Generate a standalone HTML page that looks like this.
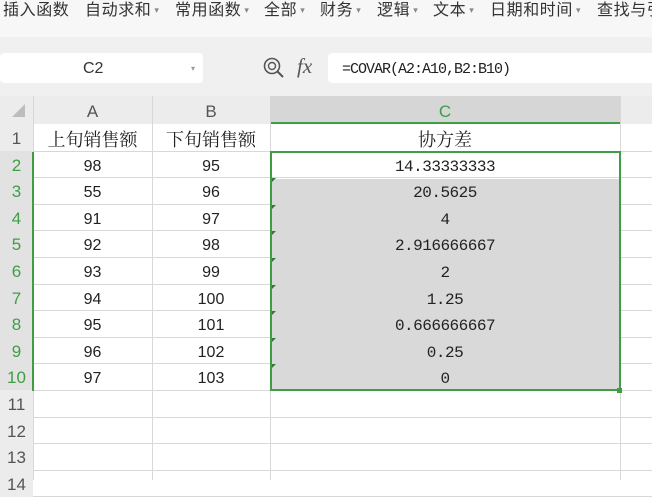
<html><head><style>
body{margin:0;width:652px;height:480px;overflow:hidden;background:#fff;font-family:"Liberation Sans","Noto Sans CJK SC",sans-serif;position:relative}
.a{position:absolute}
.tb{left:0;top:0;width:652px;height:37px;background:#f7f7f7;font-size:16px;color:#333;white-space:nowrap}
.tb span{position:absolute;top:-4px;letter-spacing:0.6px}
.tb i{font-style:normal;font-size:9px;color:#888;margin-left:3px;vertical-align:2px}
.c{position:absolute;text-align:center;font-size:16px;color:#222;line-height:26px;padding-top:3px}
.rh{position:absolute;left:0;width:33px;text-align:center;font-size:17px;color:#555;background:#ececec;line-height:26px;padding-top:2px;box-sizing:border-box}
.hl{position:absolute;height:1px;background:#d8d8d8;left:0;width:652px}
.vl{position:absolute;width:1px;background:#d8d8d8}
</style></head><body>
<div class="a tb"><span style="left:3px">插入函数</span><span style="left:85px">自动求和<i>▾</i></span><span style="left:175px">常用函数<i>▾</i></span><span style="left:264px">全部<i>▾</i></span><span style="left:320px">财务<i>▾</i></span><span style="left:377px">逻辑<i>▾</i></span><span style="left:433px">文本<i>▾</i></span><span style="left:490px">日期和时间<i>▾</i></span><span style="left:597px">查找与引</span></div>
<div class="a" style="left:0;top:37px;width:652px;height:59px;background:#f0f0f0"></div>
<div class="a" style="left:0;top:53px;width:203px;height:30px;background:#fff;border-radius:4px;font-size:16px;line-height:32px;color:#333"><span style="position:absolute;left:83px">C2</span><span style="position:absolute;left:191px;font-size:8px;color:#999">▾</span></div>
<svg class="a" style="left:262px;top:56px" width="26" height="26" viewBox="0 0 26 26"><circle cx="10" cy="10" r="7.5" fill="none" stroke="#555" stroke-width="1.6"/><circle cx="10" cy="10" r="3.5" fill="none" stroke="#555" stroke-width="1.4"/><path d="M15.5 15.5L21 21" stroke="#555" stroke-width="2"/></svg>
<div class="a" style="left:297px;top:54px;font-family:'Liberation Serif',serif;font-style:italic;font-size:21px;color:#555">fx</div>
<div class="a" style="left:328px;top:53px;width:330px;height:30px;background:#fff;border-radius:4px;font-family:'Liberation Mono','Noto Sans CJK SC',monospace;font-size:15px;line-height:34px;color:#222;padding-left:14px;letter-spacing:-1px">=COVAR(A2:A10,B2:B10)</div>
<div class="a" style="left:0;top:96px;width:652px;height:28px;background:#ececec"></div>
<div class="a" style="left:270px;top:96px;width:350px;height:28px;background:#d6d6d6;border-bottom:2px solid #3f9e45;box-sizing:border-box"></div>
<svg class="a" style="left:10px;top:102px" width="16" height="16"><path d="M15 2V15H2Z" fill="#bdbdbd"/></svg>
<div class="c" style="left:33px;top:96px;width:119px;color:#555;font-size:17px">A</div>
<div class="c" style="left:152px;top:96px;width:118px;color:#555;font-size:17px">B</div>
<div class="c" style="left:270px;top:96px;width:350px;color:#3f9e45;font-size:17px">C</div>
<div class="vl" style="left:33px;top:96px;height:384px"></div>
<div class="vl" style="left:152px;top:96px;height:384px"></div>
<div class="vl" style="left:270px;top:96px;height:384px"></div>
<div class="vl" style="left:620px;top:96px;height:384px"></div>
<div class="a" style="left:270px;top:152px;width:350px;height:239px;background:#d9d9d9"></div>
<div class="a" style="left:270px;top:152px;width:350px;height:27px;background:#fff"></div>
<div id="g"></div>
<script>
var d=[["上旬销售额","下旬销售额","协方差"],["98","95","14.33333333"],["55","96","20.5625"],["91","97","4"],["92","98","2.916666667"],["93","99","2"],["94","100","1.25"],["95","101","0.666666667"],["96","102","0.25"],["97","103","0"]];
var h="";
for(var r=0;r<14;r++){var y=124+r*26.6;
h+='<div class="hl" style="top:'+Math.round(y+26.6)+'px"></div>';
h+='<div class="rh" style="top:'+Math.round(y)+'px;height:27px;'+(r>=1&&r<=9?'color:#3f9e45;background:#e2e2e2':'')+'">'+(r+1)+'</div>';
if(r<10){var f=r==0?"font-size:18px;font-family:'Noto Serif CJK SC',serif;line-height:24px":"";var m=r>0?"font-family:'Liberation Mono',monospace;font-size:16px;letter-spacing:-0.5px":"font-size:18px;font-family:'Noto Serif CJK SC',serif;line-height:24px";
h+='<div class="c" style="left:33px;width:119px;top:'+Math.round(y)+'px;'+f+'">'+d[r][0]+'</div>';
h+='<div class="c" style="left:152px;width:118px;top:'+Math.round(y)+'px;'+f+'">'+d[r][1]+'</div>';
h+='<div class="c" style="left:270px;width:350px;top:'+Math.round(y)+'px;'+m+'">'+d[r][2]+'</div>';
if(r>=2)h+='<svg class="a" style="left:272px;top:'+Math.round(y+1)+'px" width="5" height="5"><path d="M0 0H4L0 4Z" fill="#2e7d32"/></svg>';}
}
document.getElementById("g").innerHTML=h;
</script>
<div class="a" style="left:32px;top:152px;width:2px;height:239px;background:#3f9e45"></div>
<div class="a" style="left:270px;top:151px;width:351px;height:240px;border:2px solid #3f9e45;box-sizing:border-box"></div>
<div class="a" style="left:617px;top:388px;width:5px;height:5px;background:#3f9e45"></div>
</body></html>
